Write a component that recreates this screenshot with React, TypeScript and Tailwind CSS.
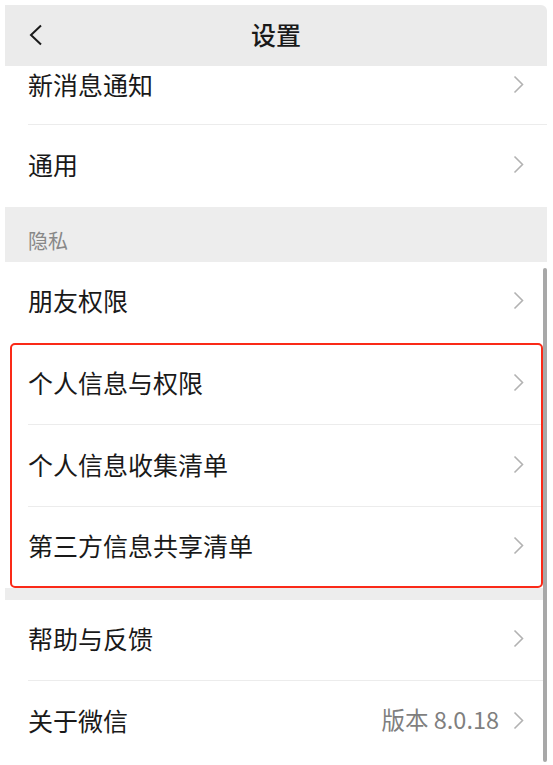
const font = { fontFamily: '"Noto Sans CJK SC", "Noto Sans", sans-serif' };

function Chevron() {
  return (
    <svg width="11" height="19" viewBox="0 0 11 19" className="shrink-0">
      <polyline points="1.5,1.5 9.5,9.5 1.5,17.5" fill="none" stroke="#b2b2b2" strokeWidth="1.6" />
    </svg>
  );
}

function Row({ label, value, last, className = 'h-[81.5px]' }: { label: string; value?: string; last?: boolean; className?: string }) {
  return (
    <div className={`relative flex items-center bg-white pl-[23px] pr-[23px] ${className}`}>
      <span className="flex-1 text-[25px] text-[#191919] leading-none">{label}</span>
      {value && <span className="mr-[14px] text-[23.5px] text-[#7f7f7f] leading-none">{value}</span>}
      <Chevron />
      {!last && <div className="absolute bottom-0 left-[23px] right-0 h-px bg-[#ececec]" />}
    </div>
  );
}

export default function App() {
  return (
    <div className="relative w-[553px] h-[765px] overflow-hidden bg-white" style={font}>
      <div className="ml-[5px] w-[542px]">
        <header className="relative mt-[5px] flex h-[61px] items-center justify-center rounded-tr-[6px] bg-[#ebebeb] pb-[2px]">
          <svg width="16" height="22" viewBox="0 0 16 22" className="absolute left-[23px] top-[19px]">
            <polyline points="13,1.5 3,11 13,20.5" fill="none" stroke="#1a1a1a" strokeWidth="2" />
          </svg>
          <h1 className="text-[25px] font-medium text-[#191919] leading-none">设置</h1>
        </header>

        <Row label="新消息通知" className="h-[59px] pb-[22px]" />
        <Row label="通用" last className="h-[82px] pb-[4px]" />

        <div className="flex h-[55px] items-end bg-[#ededed] pb-[11px] pl-[23px]">
          <span className="text-[20px] text-[#888888] leading-none">隐私</span>
        </div>

        <Row label="朋友权限" last className="h-[81px] pb-[4px]" />

        <div className="relative">
          <Row label="个人信息与权限" className="h-[82px] pb-[4px]" />
          <Row label="个人信息收集清单" className="h-[82px] pb-[4px]" />
          <Row label="第三方信息共享清单" last className="h-[81px] pb-[4px]" />
          <div className="absolute left-[5px] right-[4px] top-0 bottom-0 rounded-[5px] border-2 border-[#fa2a18]" />
        </div>

        <div className="h-[12px] bg-[#ededed]" />

        <Row label="帮助与反馈" className="h-[81px] pb-[4px]" />
        <Row label="关于微信" value="版本 8.0.18" last className="h-[82px] pb-[4px]" />
      </div>

      <div className="absolute left-[543px] top-[268px] h-[494px] w-[4px] rounded-full bg-[#a8a8a8]" />
    </div>
  );
}
